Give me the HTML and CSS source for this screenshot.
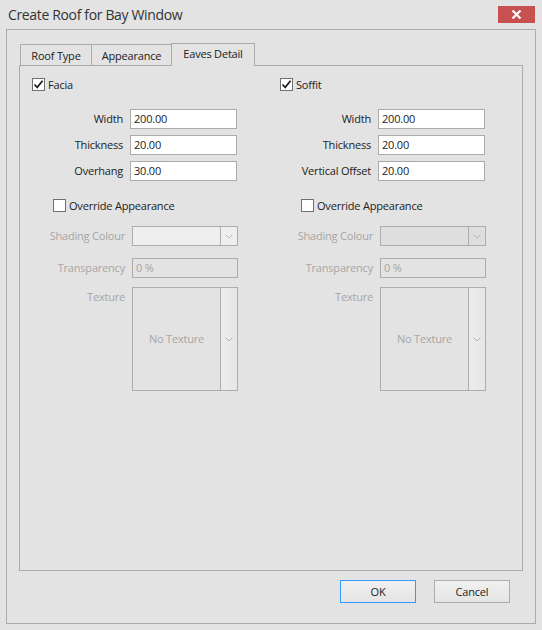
FILE: index.html
```html
<!DOCTYPE html>
<html>
<head>
<meta charset="utf-8">
<link rel="stylesheet" href="styles.css">
</head>
<body>
<div class="window">
  <div class="titlebar">
    <div class="title">Create Roof for Bay Window</div>
    <div class="close">
      <svg width="11" height="9" viewBox="0 0 11 9"><path d="M1.5 0.5 L9.5 8.5 M9.5 0.5 L1.5 8.5" stroke="#ffffff" stroke-width="2.2" fill="none"/></svg>
    </div>
  </div>
  <div class="frame">
    <div class="tabstrip">
      <div class="tab-spacer"></div>
      <div class="tab tab-first">Roof Type</div>
      <div class="tab tab-mid">Appearance</div>
      <div class="tab tab-active">Eaves Detail</div>
      <div class="tab-fill"></div>
    </div>
    <div class="panel">
      <div class="column">
        <div class="check-row">
          <span class="checkbox checked"><svg width="11" height="11" viewBox="0 0 11 11"><path d="M1.5 5.5 L4.2 8.4 L9.6 1.8" stroke="#222" stroke-width="1.8" fill="none"/></svg></span>
          <span class="check-label">Facia</span>
        </div>
        <div class="fields">
          <label class="flabel">Width</label><div class="input">200.00</div>
          <label class="flabel">Thickness</label><div class="input">20.00</div>
          <label class="flabel">Overhang</label><div class="input">30.00</div>
        </div>
        <div class="check-row override">
          <span class="checkbox"></span>
          <span class="check-label">Override Appearance</span>
        </div>
        <div class="drow first">
          <span class="dlabel">Shading Colour</span>
          <div class="combo light"><div class="combo-main"></div><div class="combo-btn"><svg width="8" height="5" viewBox="0 0 8 5"><path d="M0.5 0.5 L4 4 L7.5 0.5" stroke="#b4b4b4" stroke-width="1" fill="none"/></svg></div></div>
        </div>
        <div class="drow second">
          <span class="dlabel">Transparency</span>
          <div class="dinput">0 %</div>
        </div>
        <div class="drow third">
          <span class="dlabel">Texture</span>
          <div class="texture"><div class="texture-main">No Texture</div><div class="texture-btn"><svg width="8" height="5" viewBox="0 0 8 5"><path d="M0.5 0.5 L4 4 L7.5 0.5" stroke="#b4b4b4" stroke-width="1" fill="none"/></svg></div></div>
        </div>
      </div>
      <div class="column">
        <div class="check-row">
          <span class="checkbox checked"><svg width="11" height="11" viewBox="0 0 11 11"><path d="M1.5 5.5 L4.2 8.4 L9.6 1.8" stroke="#222" stroke-width="1.8" fill="none"/></svg></span>
          <span class="check-label">Soffit</span>
        </div>
        <div class="fields">
          <label class="flabel">Width</label><div class="input">200.00</div>
          <label class="flabel">Thickness</label><div class="input">20.00</div>
          <label class="flabel">Vertical Offset</label><div class="input">20.00</div>
        </div>
        <div class="check-row override">
          <span class="checkbox"></span>
          <span class="check-label">Override Appearance</span>
        </div>
        <div class="drow first">
          <span class="dlabel">Shading Colour</span>
          <div class="combo"><div class="combo-main"></div><div class="combo-btn"><svg width="8" height="5" viewBox="0 0 8 5"><path d="M0.5 0.5 L4 4 L7.5 0.5" stroke="#b4b4b4" stroke-width="1" fill="none"/></svg></div></div>
        </div>
        <div class="drow second">
          <span class="dlabel">Transparency</span>
          <div class="dinput">0 %</div>
        </div>
        <div class="drow third">
          <span class="dlabel">Texture</span>
          <div class="texture"><div class="texture-main">No Texture</div><div class="texture-btn"><svg width="8" height="5" viewBox="0 0 8 5"><path d="M0.5 0.5 L4 4 L7.5 0.5" stroke="#b4b4b4" stroke-width="1" fill="none"/></svg></div></div>
        </div>
      </div>
    </div>
    <div class="buttons">
      <div class="btn btn-default">OK</div>
      <div class="btn">Cancel</div>
    </div>
  </div>
</div>
</body>
</html>
```
FILE: styles.css
```css
html, body {
  margin: 0;
  padding: 0;
}
body {
  background: #e3e3e3;
  font-family: "Open Sans", "Noto Sans", sans-serif;
  font-size: 11px;
  letter-spacing: -0.2px;
  color: #222;
}
.window {
  width: 542px;
  height: 630px;
  display: flex;
  flex-direction: column;
  box-sizing: border-box;
}
.titlebar {
  height: 29px;
  display: flex;
  align-items: flex-start;
}
.title {
  font-size: 14px;
  letter-spacing: -0.35px;
  color: #333;
  padding-left: 8px;
  padding-top: 5px;
  line-height: 19px;
}
.close {
  margin-left: auto;
  margin-right: 7px;
  margin-top: 6px;
  width: 37px;
  height: 17px;
  background: #c75050;
  display: flex;
  align-items: center;
  justify-content: center;
}
.frame {
  margin: 0 6px;
  height: 595px;
  box-sizing: border-box;
  border: 1px solid #ababab;
  padding: 12px 12px 0 12px;
  display: flex;
  flex-direction: column;
}
.tabstrip {
  display: flex;
  height: 24px;
  align-items: flex-end;
}
.tab-spacer {
  width: 1px;
  height: 1px;
  border-bottom: 1px solid #ababab;
  box-sizing: border-box;
}
.tab {
  box-sizing: border-box;
  display: flex;
  align-items: center;
  justify-content: center;
  color: #222;
}
.tab-first {
  width: 72px;
  height: 22px;
  border: 1px solid #ababab;
}
.tab-mid {
  width: 79px;
  height: 22px;
  border: 1px solid #ababab;
  border-left: none;
  border-right: none;
}
.tab-active {
  width: 84px;
  height: 23px;
  border: 1px solid #ababab;
  border-bottom: none;
  padding-bottom: 3px;
}
.tab-fill {
  flex: 1;
  height: 1px;
  border-bottom: 1px solid #ababab;
  box-sizing: border-box;
}
.panel {
  height: 505px;
  box-sizing: border-box;
  border: 1px solid #ababab;
  border-top: none;
  padding: 12px 0 0 12px;
  display: grid;
  grid-template-columns: 248px 1fr;
  align-items: start;
}
.column {
  display: flex;
  flex-direction: column;
}
.check-row {
  display: flex;
  align-items: center;
  height: 13px;
}
.checkbox {
  width: 13px;
  height: 13px;
  box-sizing: border-box;
  border: 1px solid #707070;
  background: #fff;
  display: flex;
  align-items: center;
  justify-content: center;
}
.check-label {
  margin-left: 3px;
  line-height: 13px;
}
.fields {
  margin-top: 18px;
  display: grid;
  grid-template-columns: 91px 107px;
  column-gap: 7px;
  row-gap: 6px;
}
.flabel {
  text-align: right;
  line-height: 20px;
  white-space: nowrap;
}
.input {
  height: 20px;
  box-sizing: border-box;
  border: 1px solid #ababab;
  background: #fff;
  padding-left: 3px;
  line-height: 18px;
}
.override {
  margin-top: 18px;
  margin-left: 21px;
}
.drow {
  display: flex;
  align-items: flex-start;
  gap: 7px;
  color: #a6a6a6;
}
.drow.first { margin-top: 14px; }
.drow.second { margin-top: 12px; }
.drow.third { margin-top: 9px; }
.dlabel {
  width: 93px;
  flex: none;
  text-align: right;
  line-height: 20px;
  white-space: nowrap;
}
.combo {
  width: 106px;
  height: 20px;
  box-sizing: border-box;
  border: 1px solid #adadad;
  background: #dedede;
  display: flex;
}
.combo.light {
  background: #efefef;
}
.combo-main {
  flex: 1;
}
.combo-btn {
  width: 16px;
  border-left: 1px solid #adadad;
  display: flex;
  align-items: center;
  justify-content: center;
}
.dinput {
  width: 106px;
  height: 20px;
  box-sizing: border-box;
  border: 1px solid #adadad;
  padding-left: 3px;
  line-height: 18px;
}
.texture {
  width: 106px;
  height: 104px;
  box-sizing: border-box;
  border: 1px solid #adadad;
  display: flex;
}
.texture-main {
  flex: 1;
  display: flex;
  align-items: center;
  justify-content: center;
  padding-bottom: 2px;
}
.texture-btn {
  width: 16px;
  border-left: 1px solid #adadad;
  background: linear-gradient(to right, #ececec, #e6e6e6);
  display: flex;
  align-items: center;
  justify-content: center;
}
.buttons {
  margin-top: 9px;
  padding-right: 13px;
  display: flex;
  justify-content: flex-end;
  gap: 18px;
}
.btn {
  width: 76px;
  height: 23px;
  box-sizing: border-box;
  border: 1px solid #adadad;
  background: linear-gradient(#f0f0f0, #e5e5e5);
  display: flex;
  align-items: center;
  justify-content: center;
  color: #222;
}
.btn-default {
  border-color: #3399ff;
}
```
